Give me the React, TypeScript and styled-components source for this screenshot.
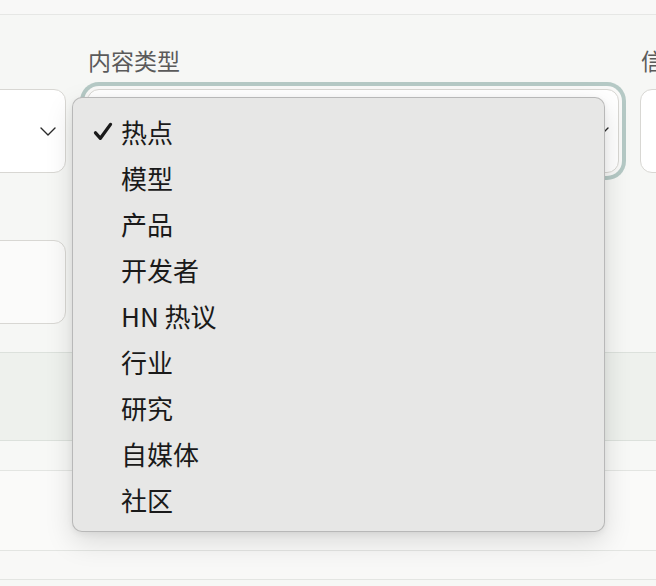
import React from "react";
import styled, { createGlobalStyle } from "styled-components";

const GlobalStyle = createGlobalStyle`
  html, body {
    margin: 0;
    padding: 0;
    width: 656px;
    height: 586px;
    overflow: hidden;
    background: #f6f7f5;
    font-family: "Noto Sans CJK SC", "Noto Sans", sans-serif;
  }
`;

// 드롭다운 항목
const OPTIONS = ["热点", "模型", "产品", "开发者", "HN 热议", "行业", "研究", "自媒体", "社区"];

function Chevron() {
  return (
    <svg width="16" height="9" viewBox="0 0 16 9" fill="none">
      <polyline points="1,1 8,8 15,1" stroke="#2a2a2a" strokeWidth="1.4" strokeLinecap="round" strokeLinejoin="round" />
    </svg>
  );
}

function Check() {
  return (
    <svg width="20" height="19" viewBox="0 0 20 19" fill="none">
      <path d="M2.5 10.8 L7.4 16.3 L17.5 2.4" stroke="#1a1a1a" strokeWidth="3.3" strokeLinecap="round" strokeLinejoin="round" />
    </svg>
  );
}

function App() {
  return (
    <Page>
      <GlobalStyle />
      <TopBar />
      <FormGrid>
        <Field>
          <Label />
          <SelectBox>
            <Chevron />
          </SelectBox>
        </Field>
        <Field>
          <Label>内容类型</Label>
          <SelectBox $focused>
            <Chevron />
          </SelectBox>
        </Field>
        <Field>
          <Label>信</Label>
          <SelectBox />
        </Field>
        <Field>
          <Label />
          <InputBox />
        </Field>
      </FormGrid>

      <Table>
        <HeaderBand />
        <Row $height={29} $bg="#f7f8f6" />
        <Row $height={79} $bg="#fafaf9" />
        <Row $height={28} $bg="#f8f8f7" />
      </Table>

      <Menu>
        {OPTIONS.map((item, i) => (
          <MenuItem key={item}>
            <CheckSlot>{i === 0 && <Check />}</CheckSlot>
            {item}
          </MenuItem>
        ))}
      </Menu>
    </Page>
  );
}

const Page = styled.div`
  position: relative;
  width: 656px;
  height: 586px;
  overflow: hidden;
  background: #f6f7f5;
`;

const TopBar = styled.div`
  height: 14px;
  background: #f8f8f7;
  border-bottom: 1px solid #e6e7e5;
`;

const FormGrid = styled.div`
  display: grid;
  grid-template-columns: repeat(3, 532px);
  column-gap: 21px;
  row-gap: 25px;
  margin-left: -466px;
  padding-top: 32px;
`;

const Field = styled.div`
  display: flex;
  flex-direction: column;
  gap: 16px;
`;

const Label = styled.span`
  height: 26px;
  font-size: 23px;
  line-height: 26px;
  color: #5a5a5a;
  padding-left: 1px;
  white-space: nowrap;
`;

const SelectBox = styled.div<{ $focused?: boolean }>`
  height: 84px;
  box-sizing: border-box;
  border: 1px solid #d8d7d3;
  border-radius: 12px;
  background: #ffffff;
  display: flex;
  align-items: center;
  justify-content: flex-end;
  padding: 0 9px 0 20px;
  box-shadow: ${(p) => (p.$focused ? "0 0 0 3px #f9f9f8, 0 0 0 7px #b5c9c5" : "none")};
`;

const InputBox = styled.div`
  height: 84px;
  box-sizing: border-box;
  border: 1px solid #d8d7d3;
  border-radius: 12px;
  background: #fbfbfa;
`;

const Table = styled.div`
  margin-top: 28px;
  display: flex;
  flex-direction: column;
`;

const HeaderBand = styled.div`
  height: 87px;
  background: #eef1ed;
  border-top: 1px solid #dce1dc;
  border-bottom: 1px solid #dce1dc;
`;

const Row = styled.div<{ $height: number; $bg: string }>`
  height: ${(p) => p.$height}px;
  background: ${(p) => p.$bg};
  border-bottom: 1px solid #e3e5e2;
`;

const Menu = styled.div`
  position: absolute;
  left: 72px;
  top: 97px;
  width: 533px;
  height: 435px;
  box-sizing: border-box;
  padding: 10px 0;
  background: #e7e7e6;
  border: 1px solid rgba(0, 0, 0, 0.2);
  border-radius: 10px;
  box-shadow: 0 10px 28px rgba(0, 0, 0, 0.13), 0 2px 6px rgba(0, 0, 0, 0.06);
`;

const MenuItem = styled.div`
  display: flex;
  align-items: center;
  height: 46px;
  padding-left: 20px;
  font-size: 26px;
  color: #1a1a1a;
  white-space: nowrap;
`;

const CheckSlot = styled.span`
  width: 28px;
  display: flex;
  align-items: center;
`;

export default App;
